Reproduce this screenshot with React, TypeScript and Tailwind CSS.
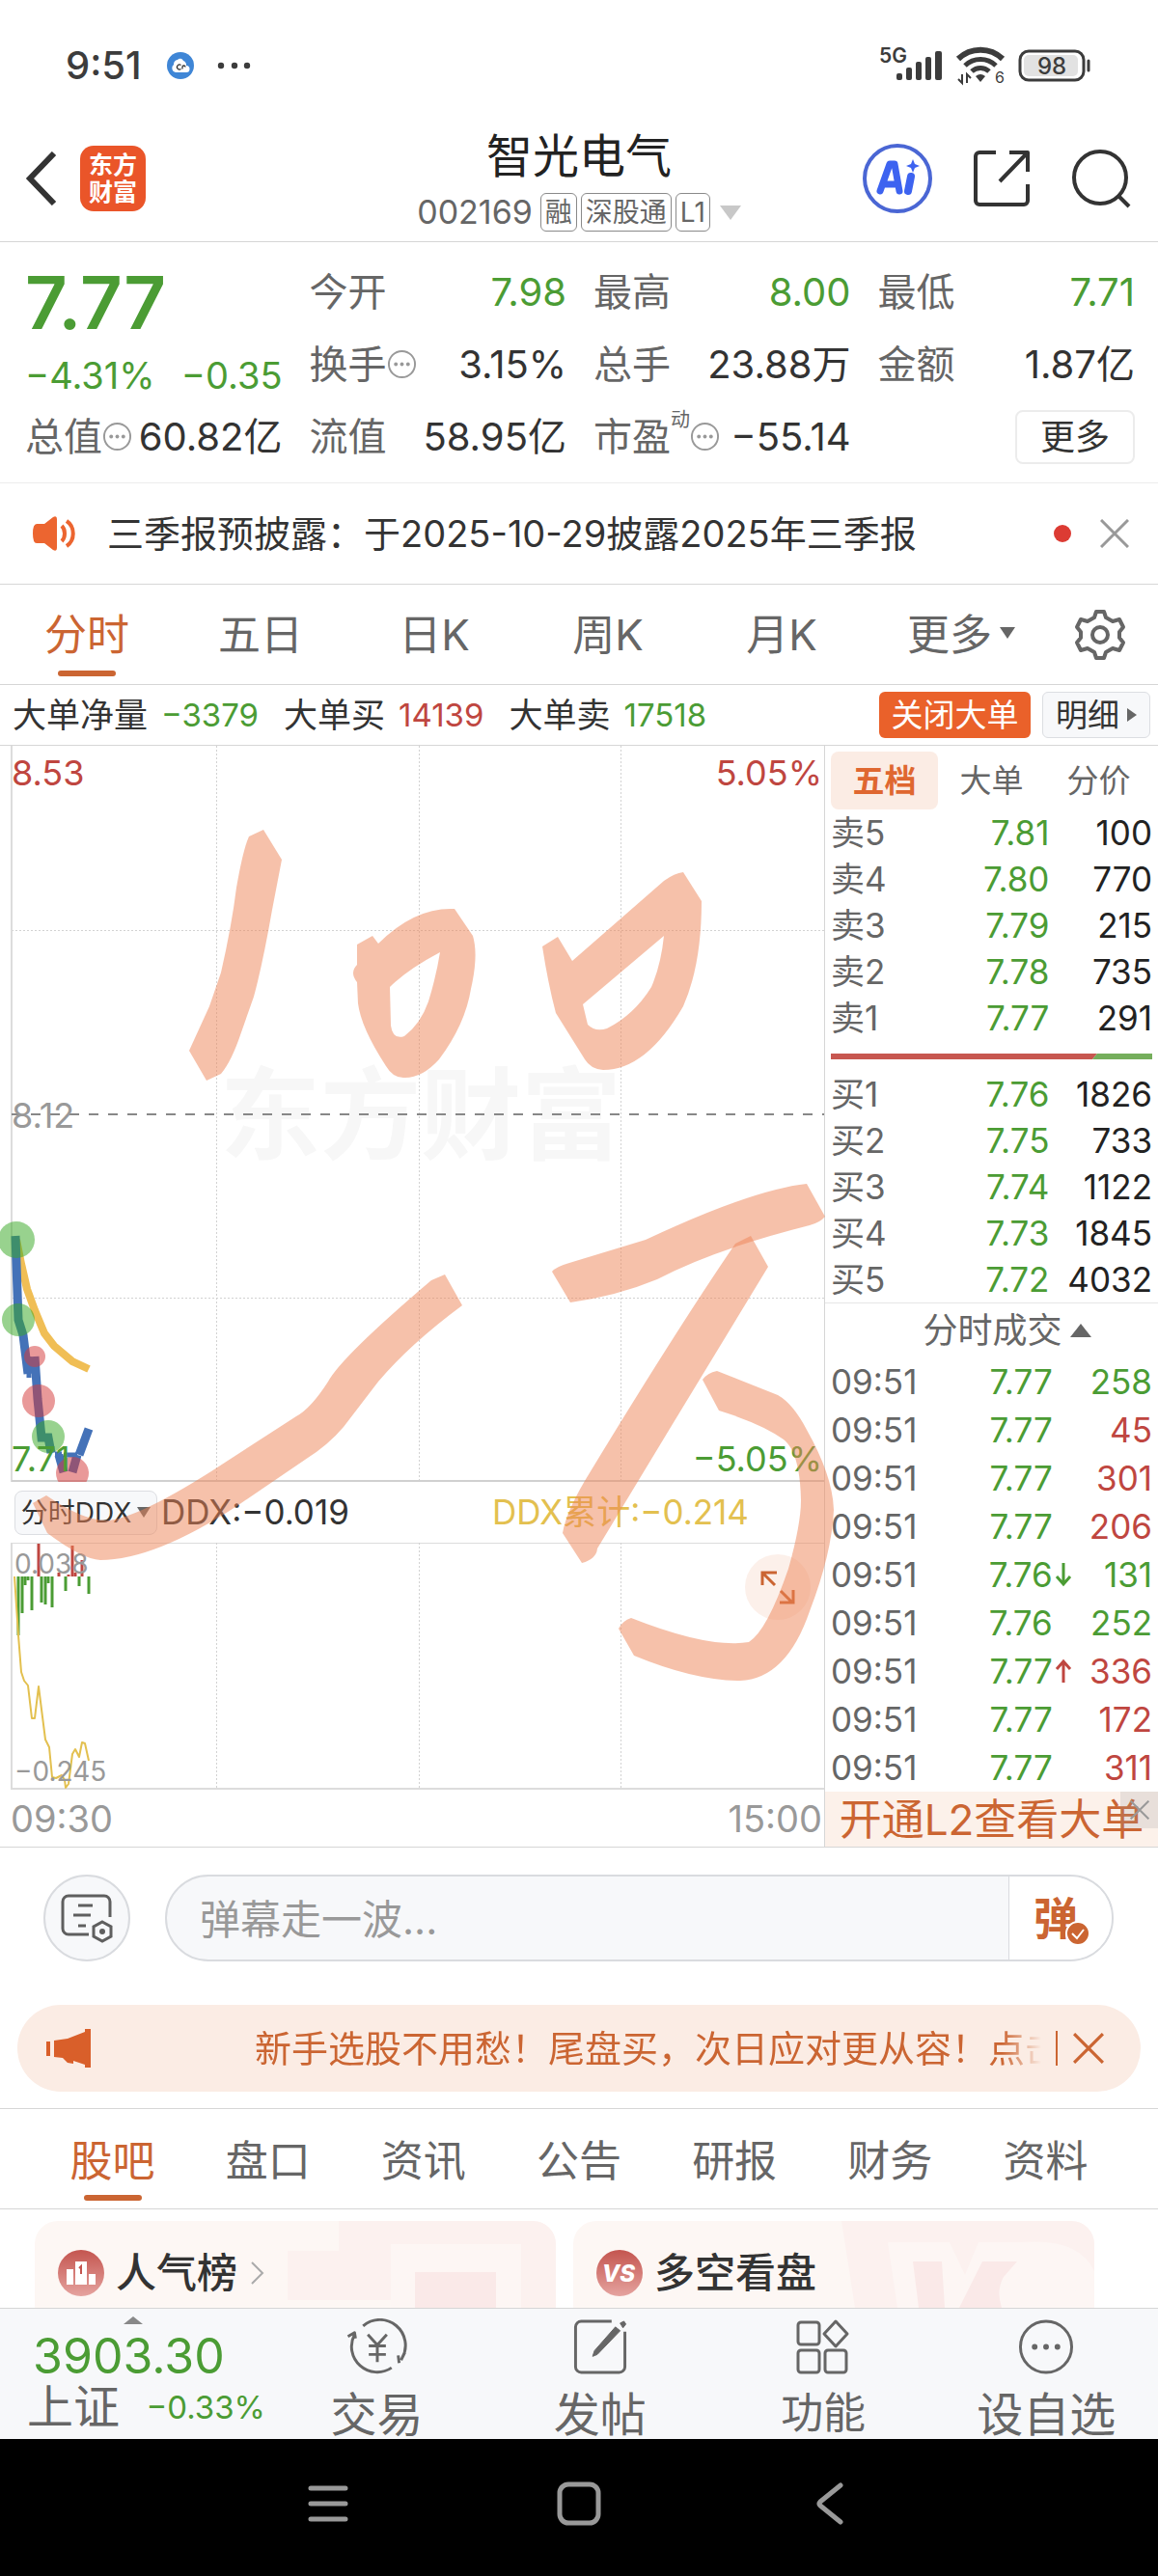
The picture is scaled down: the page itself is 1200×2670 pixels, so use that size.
import type { ReactNode } from 'react'
import { clsx } from 'clsx'

const GREEN = 'text-[#4b9c34]'
const RED = 'text-[#bf4640]'

const PERIODS = ['分时', '五日', '日K', '周K', '月K']

const SELLS = [
  { label: '卖5', price: '7.81', volume: '100' },
  { label: '卖4', price: '7.80', volume: '770' },
  { label: '卖3', price: '7.79', volume: '215' },
  { label: '卖2', price: '7.78', volume: '735' },
  { label: '卖1', price: '7.77', volume: '291' },
]

const BUYS = [
  { label: '买1', price: '7.76', volume: '1826' },
  { label: '买2', price: '7.75', volume: '733' },
  { label: '买3', price: '7.74', volume: '1122' },
  { label: '买4', price: '7.73', volume: '1845' },
  { label: '买5', price: '7.72', volume: '4032' },
]

const TRADES: Array<{ price: string; volume: string; up: boolean; arrow?: 'up' | 'down' }> = [
  { price: '7.77', volume: '258', up: false },
  { price: '7.77', volume: '45', up: true },
  { price: '7.77', volume: '301', up: true },
  { price: '7.77', volume: '206', up: true },
  { price: '7.76', volume: '131', up: false, arrow: 'down' },
  { price: '7.76', volume: '252', up: false },
  { price: '7.77', volume: '336', up: true, arrow: 'up' },
  { price: '7.77', volume: '172', up: true },
  { price: '7.77', volume: '311', up: true },
]

const INFO_TABS = ['股吧', '盘口', '资讯', '公告', '研报', '财务', '资料']

// [x, end y] of each DDX bar, measured from the zero line
const DDX_ZERO = 1634
const DDX_GREEN = [[19, 1695], [23, 1672], [26, 1643], [29, 1638], [33, 1669], [43, 1661], [47, 1663], [50, 1641], [54, 1666], [68, 1649], [82, 1644], [92, 1652]]
const DDX_RED = [[40, 1600], [61, 1630], [71, 1632], [75, 1602], [78, 1630], [85, 1617]]

function MoreDots() {
  return (
    <svg viewBox="0 0 32 32" className="h-[31px] w-[31px] shrink-0" fill="none" aria-hidden="true">
      <circle cx="16" cy="16" r="14" stroke="#999" strokeWidth="2" />
      <circle cx="9.500" cy="16" r="2" fill="#999" />
      <circle cx="16" cy="16" r="2" fill="#999" />
      <circle cx="22.500" cy="16" r="2" fill="#999" />
    </svg>
  )
}

function Cross({ className }: { className: string }) {
  return (
    <svg viewBox="0 0 30 30" className={className} fill="none" stroke="currentColor" strokeWidth="3" aria-hidden="true">
      <path d="M1 1 29 29M29 1 1 29" />
    </svg>
  )
}

function StatusBar() {
  return (
    <div className="flex h-[136px] items-center justify-between pl-[68px] pr-[67px] text-[#3c3c3c]">
      <div className="flex items-center">
        <span className="text-[40px] font-medium">9:51</span>
        <svg viewBox="0 0 28 28" className="ml-[26px] h-7 w-7" aria-hidden="true">
          <circle cx="14" cy="14" r="14" fill="#3f86d6" />
          <path d="M9 21a4.500 4.500 0 0 1-2-8 5 5 0 0 1 4-5 3.500 3.500 0 0 1 6 1 5 5 0 0 1 3 5 3.500 3.500 0 0 1 0 7z" fill="#fff" />
          <path d="M14.500 13.500a2.500 2.500 0 1 0 0 4M16 17.500v-2a1.500 1.500 0 0 1 3 0" fill="none" stroke="#333" strokeWidth="1.300" />
        </svg>
        <svg viewBox="0 0 36 8" className="ml-6 h-2 w-9" fill="currentColor" aria-hidden="true">
          <circle cx="4" cy="4" r="3.200" />
          <circle cx="18" cy="4" r="3.200" />
          <circle cx="31" cy="4" r="3.200" />
        </svg>
      </div>
      <div className="flex items-center">
        <svg viewBox="0 0 68 40" className="h-10 w-[68px] overflow-visible" fill="currentColor" aria-hidden="true">
          <text x="0" y="17" fontSize="21" fontWeight="600">5G</text>
          <rect x="18" y="28" width="6" height="7" rx="2" />
          <rect x="28" y="22" width="6" height="13" rx="2" />
          <rect x="38" y="16" width="6" height="19" rx="2" />
          <rect x="48" y="11" width="6" height="24" rx="2" />
          <rect x="58" y="5" width="7" height="30" rx="2" />
        </svg>
        <svg viewBox="0 0 52 40" className="ml-3 h-10 w-[52px] overflow-visible" fill="none" stroke="currentColor" aria-hidden="true">
          <path d="M2 13a33 33 0 0 1 46 0" strokeWidth="6" />
          <path d="M9 20a23 23 0 0 1 32 0" strokeWidth="5" />
          <path d="M16 26a13 13 0 0 1 18 0" strokeWidth="5" />
          <path d="M25 37l-5-6a8 8 0 0 1 10 0z" fill="currentColor" strokeWidth="0" />
          <path d="M6 29v9l-4-4M11 38v-9l4 4" strokeWidth="2" />
          <text x="40" y="38" fontSize="16" fill="currentColor" stroke="none">6</text>
        </svg>
        <svg viewBox="0 0 78 34" className="ml-3 h-[34px] w-[78px]" aria-hidden="true">
          <rect x="2" y="2" width="66" height="30" rx="9" fill="none" stroke="currentColor" strokeWidth="3" />
          <rect x="6" y="6" width="56" height="22" rx="5" fill="#e2e2e2" />
          <path d="M73 12v10" stroke="currentColor" strokeWidth="3" strokeLinecap="round" />
          <text x="35" y="26" fontSize="24" fontWeight="500" fill="currentColor" textAnchor="middle">98</text>
        </svg>
      </div>
    </div>
  )
}

function Tag({ children }: { children: ReactNode }) {
  return <span className="rounded-md border border-[#8a8a8a] px-1 text-[28px] leading-[38px]">{children}</span>
}

function Header() {
  return (
    <header className="grid grid-cols-[1fr_auto_1fr] items-center border-b border-[#d6d6d6] pb-2.5 pt-0.5">
      <div className="flex items-center gap-6 pb-2 pl-[26px]">
        <button type="button" aria-label="返回">
          <svg viewBox="0 0 33 56" className="h-14 w-[33px]" fill="none" stroke="#333" strokeWidth="6" aria-hidden="true">
            <path d="M30 2 5 28l25 26" />
          </svg>
        </button>
        <a
          href="#home"
          className="flex h-[68px] w-[68px] flex-col items-center justify-center rounded-[14px] bg-[#ea5529] text-[25px] font-bold leading-[28px] text-white"
        >
          <span>东方</span>
          <span>财富</span>
        </a>
      </div>
      <div className="flex flex-col items-center">
        <h1 className="text-[48px] leading-[48px] text-[#222]">智光电气</h1>
        <div className="mt-3.5 flex h-10 items-center gap-1 text-[#666]">
          <span className="mr-1 text-[34px]">002169</span>
          <Tag>融</Tag>
          <Tag>深股通</Tag>
          <Tag>L1</Tag>
          <svg viewBox="0 0 22 15" className="ml-1.5 h-[15px] w-[22px]" fill="#c8c8c8" aria-hidden="true">
            <path d="M0 0h22L11 15z" />
          </svg>
        </div>
      </div>
      <div className="flex items-center justify-end gap-[42px] pb-2 pr-[28px]">
        <button type="button" aria-label="AI">
          <svg viewBox="0 0 72 72" className="h-[72px] w-[72px]" aria-hidden="true">
            <circle cx="36" cy="36" r="34" fill="none" stroke="#4a66d4" strokeWidth="4" />
            <path d="M18 49 28 21h5l5 28M22 42h13" fill="none" stroke="#3d63f0" strokeWidth="7" strokeLinejoin="round" strokeLinecap="round" />
            <path d="M50 34l-3 15" stroke="#3d63f0" strokeWidth="8" strokeLinecap="round" />
            <path d="M52 16l2 5 5 2-5 2-2 5-2-5-5-2 5-2z" fill="#3d63f0" />
          </svg>
        </button>
        <button type="button" aria-label="分享">
          <svg viewBox="0 0 60 60" className="h-[60px] w-[60px]" fill="none" stroke="#333" strokeWidth="4" strokeLinejoin="round" aria-hidden="true">
            <path d="M24 3H7a4 4 0 0 0-4 4v46a4 4 0 0 0 4 4h46a4 4 0 0 0 4-4V36" />
            <path d="M38 3h19v20M56 4 28 33" />
          </svg>
        </button>
        <button type="button" aria-label="搜索">
          <svg viewBox="0 0 62 62" className="h-[62px] w-[62px]" fill="none" stroke="#333" strokeWidth="4" aria-hidden="true">
            <circle cx="30" cy="30" r="27" />
            <path d="M48 48l12 12" />
          </svg>
        </button>
      </div>
    </header>
  )
}

function Stat({ label, value, green, info, sup }: { label: string; value: string; green?: boolean; info?: boolean; sup?: string }) {
  return (
    <div className="flex h-[75px] items-center justify-between">
      <dt className="flex items-center text-[#666]">
        {label}
        {sup && <span className="h-14 text-[20px]">{sup}</span>}
        {info && <MoreDots />}
      </dt>
      <dd className={green ? GREEN : 'text-[#333]'}>{value}</dd>
    </div>
  )
}

function Quote() {
  return (
    <section className="border-b border-[#ececec] pb-2.5 pl-[26px] pr-6 pt-3.5 text-[40px]">
      <dl className="grid grid-cols-4 gap-x-7">
        <div className={clsx('row-span-2 pt-2.5', GREEN)}>
          <dd className="text-[76px] font-semibold leading-[76px]">7.77</dd>
          <dd className="mt-[18px] flex justify-between text-[38px] leading-10">
            <span>−4.31%</span>
            <span>−0.35</span>
          </dd>
        </div>
        <Stat label="今开" value="7.98" green />
        <Stat label="最高" value="8.00" green />
        <Stat label="最低" value="7.71" green />
        <Stat label="换手" value="3.15%" info />
        <Stat label="总手" value="23.88万" />
        <Stat label="金额" value="1.87亿" />
        <Stat label="总值" value="60.82亿" info />
        <Stat label="流值" value="58.95亿" />
        <Stat label="市盈" value="−55.14" sup="动" info />
        <div className="flex items-center justify-end">
          <button type="button" className="h-14 w-[124px] rounded-lg border-2 border-[#ececec] text-[36px] text-[#333]">
            更多
          </button>
        </div>
      </dl>
    </section>
  )
}

function News() {
  return (
    <section className="flex h-[105px] items-center border-b border-[#d6d6d6] pl-[33px] pr-[30px]">
      <svg viewBox="0 0 46 38" className="h-[38px] w-[46px]" fill="none" stroke="#ec6530" strokeWidth="4" aria-hidden="true">
        <path d="M5 9h8L22 2q4-2 4 2v30q0 4-4 2l-9-7H5q-4 0-4-10T5 9z" fill="#ec6530" stroke="none" />
        <path d="M31 11c4 4 4 12 0 16M36 6c9 6 9 20 0 26" />
      </svg>
      <a href="#news" className="ml-8 flex-1 text-[38px] text-[#333]">
        三季报预披露：于2025-10-29披露2025年三季报
      </a>
      <span className="h-[18px] w-[18px] rounded-full bg-[#dc3b33]" />
      <button type="button" aria-label="关闭" className="ml-[30px]">
        <Cross className="h-[30px] w-[30px] text-[#999]" />
      </button>
    </section>
  )
}

function PeriodTabs() {
  return (
    <nav className="flex h-[104px] border-b border-[#d6d6d6] text-[44px] text-[#666]">
      {PERIODS.map((period, i) => (
        <button key={period} type="button" className={clsx('flex w-[15%] flex-col items-center pt-[30px]', i === 0 && 'text-[#cb6532]')}>
          <span>{period}</span>
          {i === 0 && <span className="mt-[15px] h-1.5 w-[60px] rounded-full bg-[#cb6532]" />}
        </button>
      ))}
      <button type="button" className="flex w-[16%] items-start justify-center gap-2 pt-[30px]">
        更多
        <svg viewBox="0 0 16 12" className="mt-3.5 h-3 w-4" fill="#666" aria-hidden="true">
          <path d="M0 0h16L8 12z" />
        </svg>
      </button>
      <button type="button" aria-label="设置" className="flex flex-1 items-center justify-center pl-5 pr-8">
        <svg viewBox="0 0 54 54" className="h-[54px] w-[54px]" fill="none" stroke="#666" strokeWidth="4" strokeLinejoin="round" aria-hidden="true">
          <path d="M23 3h8l2 6 7 4 7-2 4 8-4 5v6l4 5-4 8-7-2-7 4-2 6h-8l-2-6-7-4-7 2-4-8 4-5v-6l-4-5 4-8 7 2 7-4z" />
          <circle cx="27" cy="27" r="8" />
        </svg>
      </button>
    </nav>
  )
}

function OrderTotal({ label, value, className }: { label: string; value: string; className: string }) {
  return (
    <span className="flex items-center gap-3.5">
      {label}
      <span className={clsx('text-[33px]', className)}>{value}</span>
    </span>
  )
}

function BigOrders() {
  return (
    <section className="flex h-[63px] items-center border-b border-[#d6d6d6] pl-[13px] pr-2 text-[35px] text-[#333]">
      <div className="flex flex-1 gap-[26px]">
        <OrderTotal label="大单净量" value="−3379" className={GREEN} />
        <OrderTotal label="大单买" value="14139" className={RED} />
        <OrderTotal label="大单卖" value="17518" className={GREEN} />
      </div>
      <button type="button" className="h-12 w-[157px] rounded-md bg-[#ea612a] text-[33px] text-white">
        关闭大单
      </button>
      <button type="button" className="ml-3 flex h-12 w-[112px] items-center justify-center gap-2 rounded-md border border-[#dcdee2] bg-[#f7f8fa] text-[33px]">
        明细
        <svg viewBox="0 0 10 14" className="h-3.5 w-2.5" fill="#666" aria-hidden="true">
          <path d="M0 0l10 7-10 7z" />
        </svg>
      </button>
    </section>
  )
}

function PriceChart() {
  return (
    <svg viewBox="0 773 854 763" preserveAspectRatio="none" className="block h-[763px] w-full" fill="none" role="img" aria-label="分时走势">
      <text x="436" y="1194" fontSize="104" fontWeight="700" fill="#f7f7f7" textAnchor="middle">东方财富</text>
      <g stroke="#d2d2d2" strokeDasharray="2 2">
        <path d="M224.500 773v763M434.500 773v763M643.500 773v763M12 964.500h842M12 1345.500h842" />
      </g>
      <path d="M12 773v763" stroke="#dcdcdc" strokeWidth="2" />
      <path d="M12 1535h842" stroke="#d0d0d0" strokeWidth="2" />
      <path d="M12 1155h842" stroke="#888" strokeWidth="2" strokeDasharray="10 10" />
      <path d="M17 1285 22 1310 28 1336 36 1358 46 1382 56 1395 75 1411 92 1419" stroke="#f0be55" strokeWidth="8" />
      <path d="M16 1281 19 1368 24 1384 29 1424M36 1406 39 1450 43 1490 50 1490 53 1506M61 1508 66 1526M75 1526 80 1508M82 1508 92 1481" stroke="#4472b8" strokeWidth="9" />
      <path d="M57 1507h7M66 1508h14M30 1406v22M48 1490h6" stroke="#4472b8" strokeWidth="5" />
      <g fill="#3aa826" fillOpacity="0.520">
        <circle cx="17" cy="1285" r="19" />
        <circle cx="19" cy="1368" r="17" />
        <circle cx="50" cy="1489" r="17" />
      </g>
      <g fill="#d43c3c" fillOpacity="0.520">
        <circle cx="36" cy="1406" r="11" />
        <circle cx="40" cy="1452" r="17" />
        <circle cx="75" cy="1527" r="17" />
      </g>
      <g fontSize="36">
        <text x="12" y="814" fill="#bf4640">8.53</text>
        <text x="852" y="814" fill="#bf4640" textAnchor="end">5.05%</text>
        <text x="12" y="1169" fill="#999">8.12</text>
        <text x="12" y="1525" fill="#4b9c34">7.71</text>
        <text x="852" y="1525" fill="#4b9c34" textAnchor="end">−5.05%</text>
      </g>
    </svg>
  )
}

function DdxChart() {
  return (
    <svg viewBox="0 1599 854 256" preserveAspectRatio="none" className="block h-64 w-full" fill="none" role="img" aria-label="DDX">
      <path d="M12 1599.500h842" stroke="#dcdcdc" />
      <path d="M224.500 1599v256M434.500 1599v256M643.500 1599v256" stroke="#d2d2d2" strokeDasharray="2 2" />
      <path d="M12 1599v256M12 1854h842" stroke="#dcdcdc" strokeWidth="2" />
      {DDX_RED.map(([x, y]) => (
        <path key={x} d={`M${x} ${DDX_ZERO}V${y}`} stroke="#bf4640" strokeWidth="3" />
      ))}
      {DDX_GREEN.map(([x, y]) => (
        <path key={x} d={`M${x} ${DDX_ZERO}V${y}`} stroke="#4b9c34" strokeWidth="3" />
      ))}
      <path
        d="M15 1634 19 1695 22 1733 25 1742 29 1747 33 1781 36 1781 40 1748 47 1803 51 1811 54 1842 58 1843 64 1840 67 1845 68 1853 71 1849 75 1818 78 1813 82 1821 85 1806 88 1807 92 1825"
        stroke="#e3c04f"
        strokeWidth="2"
        strokeLinejoin="round"
      />
      <g fontSize="28" fill="#999">
        <text x="15" y="1631">0.038</text>
        <text x="15" y="1846">−0.245</text>
      </g>
      <circle cx="806" cy="1645" r="34" fill="#fcf0ea" />
      <path d="M803 1643l-12-12M790 1643v-13h15M809 1649l12 12M822 1648v13h-14" stroke="#cb6532" strokeWidth="3" />
    </svg>
  )
}

// Freehand marker note drawn over the chart
function Marker() {
  return (
    <svg viewBox="0 773 854 1141" preserveAspectRatio="none" className="pointer-events-none absolute inset-0 z-10 h-full w-full overflow-visible" fill="#ed8355" fillOpacity="0.500" fillRule="evenodd" aria-hidden="true">
      <path d="M258 867 273 860 292 891 282 943Q272 1000 263 1033L250 1070Q240 1100 229 1113L214 1120 196 1089 217 1043 229 1008Q240 960 245 920 252 880 258 867Z" />
      <path d="M370 979 386 970 392 978Q430 940 471 942L490 970Q496 990 488 1025 482 1062 455 1098 437 1118 418 1117 407 1117 400 1105 374 1065 371 1040L370 1018Q362 1008 370 1000ZM456 987Q422 1005 404 1023L405 1063Q407 1078 419 1074 436 1061 444 1038 452 1012 456 987Z" />
      <path d="M562 981 578 971 593 996 688 913Q699 905 708 904L727 934Q727 1000 708 1043 670 1109 625 1109 612 1108 606 1098L576 1050Q568 1020 562 981ZM688 970 604 1041 609 1062Q617 1070 629 1066 657 1052 675 1023 685 1000 688 970Z" />
      <path d="M34 1558 48 1550Q86 1576 110 1576 140 1575 219 1525L307 1468Q322 1460 340 1432 354 1406 447 1327L461 1321 479 1353Q425 1393 392 1432L356 1479Q340 1498 316 1513L247 1560Q160 1617 104 1617 85 1616 49 1589Z" />
      <path d="M572 1318Q576 1313 590 1309L669 1285Q780 1233 836 1227L855 1261Q850 1267 839 1270 740 1295 681 1326 640 1343 591 1350Z" />
      <path d="M762 1289 778 1281 796 1313 697 1476 619 1605Q618 1616 603 1620L583 1589Q587 1565 612 1525 700 1380 762 1289Z" />
      <path d="M728 1430Q733 1423 743 1421L806 1446Q822 1455 836 1482 863 1530 864 1565 862 1610 839 1670 815 1740 767 1742 720 1742 657 1716L641 1688Q645 1680 654 1677 735 1709 776 1702 795 1690 817 1626 830 1580 830 1555 829 1505 812 1492 790 1476 745 1462Z" />
    </svg>
  )
}

function Charts() {
  return (
    <div className="relative min-w-0 flex-1">
      <PriceChart />
      <div className="flex h-[63px] items-center pl-[15px] text-[35px]">
        <button type="button" className="flex h-[46px] w-[148px] items-center justify-center gap-1.5 rounded-lg border border-[#dcdee2] bg-[#f7f8fa] text-[28px] text-[#333]">
          分时DDX
          <svg viewBox="0 0 14 11" className="h-[11px] w-3.5" fill="#666" aria-hidden="true">
            <path d="M0 0h14L7 11z" />
          </svg>
        </button>
        <span className="ml-1 w-[343px] text-[#333]">DDX:−0.019</span>
        <span className="text-[#e3c04f]">DDX累计:−0.214</span>
      </div>
      <DdxChart />
      <div className="flex h-[59px] items-center justify-between pl-[11px] pr-0.5 text-[38px] text-[#999]">
        <span>09:30</span>
        <span>15:00</span>
      </div>
      <Marker />
    </div>
  )
}

function Levels({ rows }: { rows: typeof SELLS }) {
  return (
    <table className="w-full table-fixed text-[35px]">
      <tbody>
        {rows.map(row => (
          <tr key={row.label} className="h-12">
            <th scope="row" className="w-[29%] p-0 text-left font-normal text-[#666]">{row.label}</th>
            <td className={clsx('w-[39%] p-0 text-right', GREEN)}>{row.price}</td>
            <td className="p-0 text-right text-[#222]">{row.volume}</td>
          </tr>
        ))}
      </tbody>
    </table>
  )
}

function OrderBook() {
  return (
    <aside className="w-[346px] shrink-0 border-l border-[#d6d6d6]">
      <div className="px-1.5 pt-1.5">
        <div className="grid h-[60px] grid-cols-3 text-[33px] text-[#666]">
          <button type="button" className="rounded-lg bg-[#fbece4] font-bold text-[#df6730]">五档</button>
          <button type="button">大单</button>
          <button type="button">分价</button>
        </div>
        <Levels rows={SELLS} />
        <div className="flex h-[31px] items-center">
          <svg viewBox="0 0 333 6" preserveAspectRatio="none" className="h-1.5 w-full" aria-hidden="true">
            <path d="M0 0h276l-5 6H0z" fill="#c75750" />
            <path d="M276 0h57v6h-62z" fill="#75ae5c" />
          </svg>
        </div>
        <Levels rows={BUYS} />
      </div>
      <button type="button" className="flex h-[57px] w-full items-center justify-center gap-2 border-t border-[#e6e6e6] pl-8 text-[36px] text-[#666]">
        分时成交
        <svg viewBox="0 0 22 14" className="h-3.5 w-[22px]" fill="#666" aria-hidden="true">
          <path d="M0 14h22L11 0z" />
        </svg>
      </button>
      <div className="px-1.5">
        <table className="w-full table-fixed text-[35px]">
          <tbody>
            {TRADES.map((trade, i) => (
              <tr key={i} className="h-[50px]">
                <td className="w-[30%] p-0 text-[#666]">09:51</td>
                <td className={clsx('w-[39%] p-0 text-right', GREEN)}>{trade.price}</td>
                <td className="w-[6%] p-0">
                  {trade.arrow && (
                    <svg viewBox="0 0 18 26" className={clsx('ml-0.5 h-[26px] w-[18px]', trade.arrow === 'up' ? RED : 'rotate-180 text-[#4b9c34]')} fill="none" stroke="currentColor" strokeWidth="3" aria-hidden="true">
                      <path d="M9 25V3M2 11l7-8 7 8" />
                    </svg>
                  )}
                </td>
                <td className={clsx('p-0 text-right', trade.up ? RED : GREEN)}>{trade.volume}</td>
              </tr>
            ))}
          </tbody>
        </table>
      </div>
      <div className="relative flex h-[57px] items-center justify-center bg-[#fcf1ea]">
        <a href="#l2" className="text-[44px] text-[#cb6532]">开通L2查看大单</a>
        <button type="button" aria-label="关闭" className="absolute right-0 top-0 flex h-[38px] w-[39px] items-center justify-center bg-[#999]/20 text-[#999]">
          <Cross className="h-5 w-5" />
        </button>
      </div>
    </aside>
  )
}

function Danmaku() {
  return (
    <div className="flex h-[90px] gap-[36px] pl-[45px] pr-[46px]">
      <button type="button" aria-label="弹幕设置" className="flex h-[90px] w-[90px] items-center justify-center rounded-full border-2 border-[#d9dbdf] bg-[#f7f8fa]">
        <svg viewBox="0 0 56 52" className="h-[52px] w-14" fill="none" stroke="#5f5f5f" strokeWidth="3" aria-hidden="true">
          <path d="M30 43H9a6 6 0 0 1-6-6V9a6 6 0 0 1 6-6h37a6 6 0 0 1 6 6v16M19 13h15M14 23h18M19 34h8" />
          <path d="M44 30l9 5v10l-9 5-9-5V35z" />
          <circle cx="44" cy="40" r="3" fill="#5f5f5f" stroke="none" />
        </svg>
      </button>
      <div className="flex flex-1 overflow-hidden rounded-full border-2 border-[#d9dbdf] bg-[#f7f8fa]">
        <input
          type="text"
          aria-label="弹幕"
          placeholder="弹幕走一波..."
          className="min-w-0 flex-1 bg-transparent pl-[34px] pt-1 text-[42px] leading-[60px] outline-none placeholder:text-[#999]"
        />
        <button type="button" className="relative w-[107px] border-l border-[#d9dbdf] bg-white pr-2.5 text-[46px] font-bold text-[#cb6532]">
          弹
          <svg viewBox="0 0 26 26" className="absolute bottom-3.5 right-[22px] h-[26px] w-[26px]" aria-hidden="true">
            <circle cx="13" cy="13" r="12" fill="#cb6532" stroke="#fff" strokeWidth="2" />
            <path d="M7 13l5 5 7-9" fill="none" stroke="#fff" strokeWidth="2" />
          </svg>
        </button>
      </div>
    </div>
  )
}

function Promo() {
  return (
    <div className="mx-[18px] mt-[45px] flex h-[90px] items-center rounded-full bg-[#fbece4] pl-[30px] pr-[38px] text-[#cb6532]">
      <svg viewBox="0 0 46 40" className="h-10 w-[46px]" fill="#d95f2a" aria-hidden="true">
        <path d="M0 13h4v15H0zM8 12l14-2L40 3V0h6v40h-6v-3l-12-4v3l-6-1-5-5-9-1z" />
      </svg>
      <a
        href="#promo"
        className="ml-[170px] min-w-0 flex-1 overflow-hidden whitespace-nowrap text-[38px] leading-[60px] [mask-image:linear-gradient(to_right,#000_95%,transparent)]"
      >
        新手选股不用愁！尾盘买，次日应对更从容！点击
      </a>
      <span className="ml-[15px] h-9 w-0.5 bg-[#cb6532]" />
      <button type="button" aria-label="关闭" className="ml-4">
        <Cross className="h-8 w-8" />
      </button>
    </div>
  )
}

function InfoTabs() {
  return (
    <nav className="mt-[17px] grid h-[105px] grid-cols-7 border-y border-[#d6d6d6] px-9 text-[44px] text-[#666]">
      {INFO_TABS.map((tab, i) => (
        <button key={tab} type="button" className={clsx('flex flex-col items-center pt-8', i === 0 && 'text-[#cb6532]')}>
          <span>{tab}</span>
          {i === 0 && <span className="mt-[13px] h-1.5 w-[60px] rounded-full bg-[#cb6532]" />}
        </button>
      ))}
    </nav>
  )
}

function Cards() {
  return (
    <div className="grid grid-cols-2 gap-[18px] pl-9 pr-[66px] pt-3 text-[42px] font-medium text-[#333]">
      <a href="#rank" className="relative flex h-[90px] items-center overflow-hidden rounded-t-[24px] bg-[#fdf7f4] pl-6 pt-[18px]">
        <svg viewBox="0 0 278 90" className="absolute right-0 top-0 h-[90px] w-[278px]" aria-hidden="true">
          <path d="M0 31h53V0h225v90H107v-8H0z" fill="#fcf1ef" />
          <path d="M107 24h135v66H107z" fill="#fdf6f4" />
          <path d="M132 53h84v37h-84z" fill="#fae9e8" />
        </svg>
        <svg viewBox="0 0 48 48" className="relative h-12 w-12" aria-hidden="true">
          <defs>
            <linearGradient id="badge" x1="0" y1="0" x2="0" y2="1">
              <stop offset="0" stopColor="#c4554f" />
              <stop offset="1" stopColor="#e5a39f" />
            </linearGradient>
          </defs>
          <circle cx="24" cy="24" r="24" fill="url(#badge)" />
          <path d="M9 20h7v16H9zM32 25h7v11h-7zM18 12h12v24H18z" fill="#fff" />
          <path d="M22 19l2-2v8" fill="none" stroke="#c4554f" strokeWidth="2" />
        </svg>
        <span className="relative ml-3">人气榜</span>
        <svg viewBox="0 0 14 24" className="relative ml-3.5 h-6 w-3.5" fill="none" stroke="#aaa" strokeWidth="2" aria-hidden="true">
          <path d="M1 1l11 11L1 23" />
        </svg>
      </a>
      <a href="#vs" className="relative flex h-[90px] items-center overflow-hidden rounded-t-[24px] bg-[#fdf7f4] pl-6 pt-[18px]">
        <svg viewBox="0 0 262 90" className="absolute right-0 top-0 h-[90px] w-[262px]" aria-hidden="true">
          <path d="M0 0h262v90H14z" fill="#fcf1ef" />
          <path d="M48 22h64l16 34 14-34h44q60-5 76 30v38H58z" fill="#fdf6f4" />
          <path d="M74 42h30l3 48H80zM146 42h36l-14 16q-8 14-2 32h-44z" fill="#fae9e8" />
          <path d="M230 50q16 4 20 14l-9 10q-8-12-22-8-8 6-2 24h-30q-6-36 43-40z" fill="#fdf6f4" />
        </svg>
        <svg viewBox="0 0 48 48" className="relative h-12 w-12" aria-hidden="true">
          <circle cx="24" cy="24" r="24" fill="url(#badge)" />
          <text x="23" y="33" fontSize="24" fontWeight="800" fontStyle="italic" fill="#fff" textAnchor="middle">VS</text>
        </svg>
        <span className="relative ml-3">多空看盘</span>
      </a>
    </div>
  )
}

function BarItem({ label, children }: { label: string; children: ReactNode }) {
  return (
    <a href="#action" className="flex flex-1 flex-col items-center pt-2.5">
      <svg viewBox="0 0 64 60" className="h-[60px] w-16" fill="none" stroke="#666" strokeWidth="3" strokeLinejoin="round" aria-hidden="true">
        {children}
      </svg>
      <span className={clsx('mt-4', label === '功能' ? 'text-[44px] leading-[44px]' : 'text-[48px] leading-[50px]')}>{label}</span>
    </a>
  )
}

function BottomBar() {
  return (
    <footer className="flex h-[136px] overflow-hidden border-t border-[#d6d6d6] bg-[#f7f8fa] text-[#666]">
      <a href="#index" className="flex w-[275px] flex-col pt-2">
        <svg viewBox="0 0 20 8" className="mx-auto h-2 w-5" fill="#888" aria-hidden="true">
          <path d="M0 8h20L10 0z" />
        </svg>
        <span className={clsx('mt-2 pl-[34px] text-[50px] leading-[50px]', GREEN)}>3903.30</span>
        <span className="flex items-center justify-between pl-7 text-[48px] leading-[56px]">
          上证
          <span className={clsx('text-[33px]', GREEN)}>−0.33%</span>
        </span>
      </a>
      <BarItem label="交易">
        <path d="M17 8a27 27 0 0 1 41 34M55 47l-1-8M61 36l-4 8M47 52a27 27 0 0 1-39-35M1 19l7-4 1 6" />
        <path d="M22 17l10 11 10-11M32 28v18M23 29h18M23 38h18" />
      </BarItem>
      <BarItem label="发帖">
        <path d="M44 3H12a6 6 0 0 0-6 6v42a6 6 0 0 0 6 6h40a6 6 0 0 0 6-6V14" />
        <path d="M48 9l5 4-24 25-5 2 2-6zM53 5l4-2 2 3-3 4z" fill="#666" strokeWidth="1" />
      </BarItem>
      <BarItem label="功能">
        <rect x="6" y="4" width="22" height="23" rx="3" />
        <rect x="6" y="33" width="22" height="23" rx="3" />
        <rect x="34" y="33" width="22" height="23" rx="3" />
        <path d="M45 3l12 13-12 13-12-13z" />
      </BarItem>
      <BarItem label="设自选">
        <circle cx="32" cy="30" r="27" />
        <path d="M20 30h.01M32 30h.01M44 30h.01" strokeWidth="6" strokeLinecap="round" />
      </BarItem>
    </footer>
  )
}

function SystemNav() {
  return (
    <div className="bg-black">
      <div className="mx-auto grid h-[142px] w-[65%] grid-cols-3 place-items-center pb-2 text-[#999]">
        <button type="button" aria-label="最近任务">
          <svg viewBox="0 0 44 44" className="h-11 w-11" fill="none" stroke="currentColor" strokeWidth="5" strokeLinecap="round" aria-hidden="true">
            <path d="M4 6h36M4 22h36M4 38h36" />
          </svg>
        </button>
        <button type="button" aria-label="主屏幕">
          <svg viewBox="0 0 46 46" className="h-[46px] w-[46px]" fill="none" stroke="currentColor" strokeWidth="5" aria-hidden="true">
            <rect x="3" y="3" width="40" height="40" rx="9" />
          </svg>
        </button>
        <button type="button" aria-label="返回上一级">
          <svg viewBox="0 0 30 46" className="h-[46px] w-[30px]" fill="none" stroke="currentColor" strokeWidth="5" strokeLinecap="round" strokeLinejoin="round" aria-hidden="true">
            <path d="M26 4 5 21q-2 2 0 4l21 17" />
          </svg>
        </button>
      </div>
    </div>
  )
}

export default function App() {
  return (
    <div className="bg-white font-[Inter,'Noto_Sans_CJK_SC',sans-serif] leading-none">
      <StatusBar />
      <Header />
      <Quote />
      <News />
      <PeriodTabs />
      <BigOrders />
      <main>
        <div className="flex border-b border-[#d6d6d6]">
          <Charts />
          <OrderBook />
        </div>
        <div className="pt-7">
          <Danmaku />
          <Promo />
        </div>
        <InfoTabs />
        <Cards />
      </main>
      <BottomBar />
      <SystemNav />
    </div>
  )
}
